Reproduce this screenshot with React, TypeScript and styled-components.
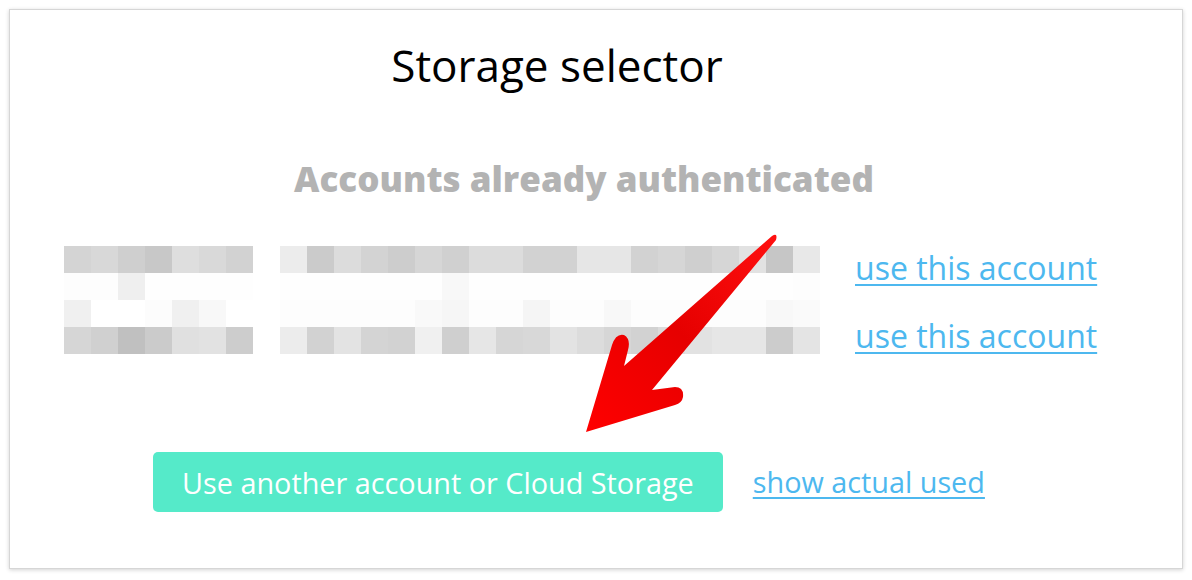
import React from "react";
import styled, { createGlobalStyle } from "styled-components";

const Global = createGlobalStyle`
  html, body { margin: 0; padding: 0; background: #ffffff; }
  body { font-family: "Open Sans", "Noto Sans", sans-serif; }
`;

const Page = styled.div`
  width: 1192px;
  height: 580px;
  padding: 9px 0 0 9px;
  box-sizing: border-box;
  background: #ffffff;
`;

const Card = styled.div`
  position: relative;
  width: 1174px;
  height: 560px;
  box-sizing: border-box;
  border: 1px solid #d6d6d6;
  box-shadow: 0 1px 4px rgba(0, 0, 0, 0.18);
  background: #ffffff;
  display: flex;
  flex-direction: column;
  padding-top: 29px;
`;

const Title = styled.h1`
  margin: 0;
  font-family: "Open Sans", sans-serif;
  font-weight: 400;
  font-size: 44px;
  line-height: 52px;
  color: #000000;
  text-align: center;
  padding-right: 78px;
`;

const Subtitle = styled.h2`
  margin: 67px 0 0;
  font-family: "Open Sans", sans-serif;
  font-weight: 800;
  font-size: 35px;
  line-height: 42px;
  color: #b3b3b3;
  text-align: center;
  padding-right: 24px;
`;

const Accounts = styled.div`
  margin-top: 46px;
  padding-left: 54px;
  display: flex;
  align-items: flex-start;
  gap: 35px;
`;

const Pixels = styled.div`
  display: grid;
  grid-template-columns: repeat(28, 27px);
  grid-auto-rows: 27px;
`;

const Block = styled.div``;

const LinkColumn = styled.div`
  display: flex;
  flex-direction: column;
  gap: 30px;
  padding-top: 3px;
`;

const TextLink = styled.a<{ $size?: number }>`
  font-family: "Open Sans", sans-serif;
  font-size: ${(p) => p.$size ?? 32}px;
  line-height: ${(p) => Math.round((p.$size ?? 32) * 1.19)}px;
  color: #4db8ef;
  text-decoration: underline;
  text-underline-offset: 4px;
  text-decoration-thickness: 2px;
  cursor: pointer;
  white-space: nowrap;
`;

const Actions = styled.div`
  margin-top: 97px;
  display: flex;
  align-items: center;
  justify-content: center;
  gap: 30px;
  padding-right: 54px;
`;

const PrimaryButton = styled.button`
  height: 60px;
  padding: 0 29px;
  border: none;
  border-radius: 5px;
  background: #55eac9;
  color: #ffffff;
  font-family: "Open Sans", sans-serif;
  font-size: 28.8px;
  cursor: pointer;
  white-space: nowrap;
`;

const Arrow = styled.svg`
  position: absolute;
  left: 551px;
  top: 211px;
  width: 240px;
  height: 220px;
  pointer-events: none;
`;

const rows: string[][] = [
  ["d4", "d8", "cf", "c8", "de", "d9", "d2", "ff", "ec", "cb", "dc", "d3", "cd", "d6", "d0", "dc", "dc", "d2", "d2", "e6", "e6", "d2", "d6", "cf", "d6", "e2", "c6", "e8"],
  ["fd", "fd", "ef", "fe", "fe", "fe", "fe", "ff", "fe", "fe", "fe", "fe", "fe", "fe", "f8", "fe", "fe", "fe", "fe", "fe", "fe", "fe", "fe", "fe", "fe", "fe", "fe", "fd"],
  ["f0", "ff", "ff", "fc", "f0", "f8", "ff", "ff", "fd", "fd", "fd", "fd", "fd", "f9", "f6", "fd", "fd", "f5", "fd", "fd", "f8", "fd", "fd", "fd", "fd", "fd", "f8", "fa"],
  ["d6", "d0", "c0", "cb", "e0", "e2", "cd", "ff", "ec", "d2", "e3", "d4", "d2", "f0", "cf", "e6", "d6", "d8", "e3", "dc", "d6", "d2", "dc", "e2", "e6", "e6", "cc", "e4"],
];

export default function App() {
  return (
    <>
      <Global />
      <Page>
        <Card>
          <Title>Storage selector</Title>
          <Subtitle>Accounts already authenticated</Subtitle>
          <Accounts>
            <Pixels>
              {rows.flatMap((row, r) =>
                row.map((g, c) => (
                  <Block key={`${r}-${c}`} style={{ background: `#${g}${g}${g}` }} />
                ))
              )}
            </Pixels>
            <LinkColumn>
              <TextLink>use this account</TextLink>
              <TextLink>use this account</TextLink>
            </LinkColumn>
          </Accounts>
          <Actions>
            <PrimaryButton>Use another account or Cloud Storage</PrimaryButton>
            <TextLink $size={28.8}>show actual used</TextLink>
          </Actions>
          <Arrow viewBox="0 0 240 220">
            <defs>
              <linearGradient id="arrowFill" x1="0" y1="1" x2="1" y2="0">
                <stop offset="0" stopColor="#ff0000" />
                <stop offset="0.5" stopColor="#e60000" />
                <stop offset="1" stopColor="#ff1010" />
              </linearGradient>
            </defs>
            <path
              d="M25,211 L51,124 Q55,112 63,114 Q70,118 67,129 L63,145 L211,15 Q217,11 215,19 L91,169 L114,166 Q123,166 122,176 Q121,182 114,184 Z"
              fill="url(#arrowFill)"
            />
          </Arrow>
        </Card>
      </Page>
    </>
  );
}
